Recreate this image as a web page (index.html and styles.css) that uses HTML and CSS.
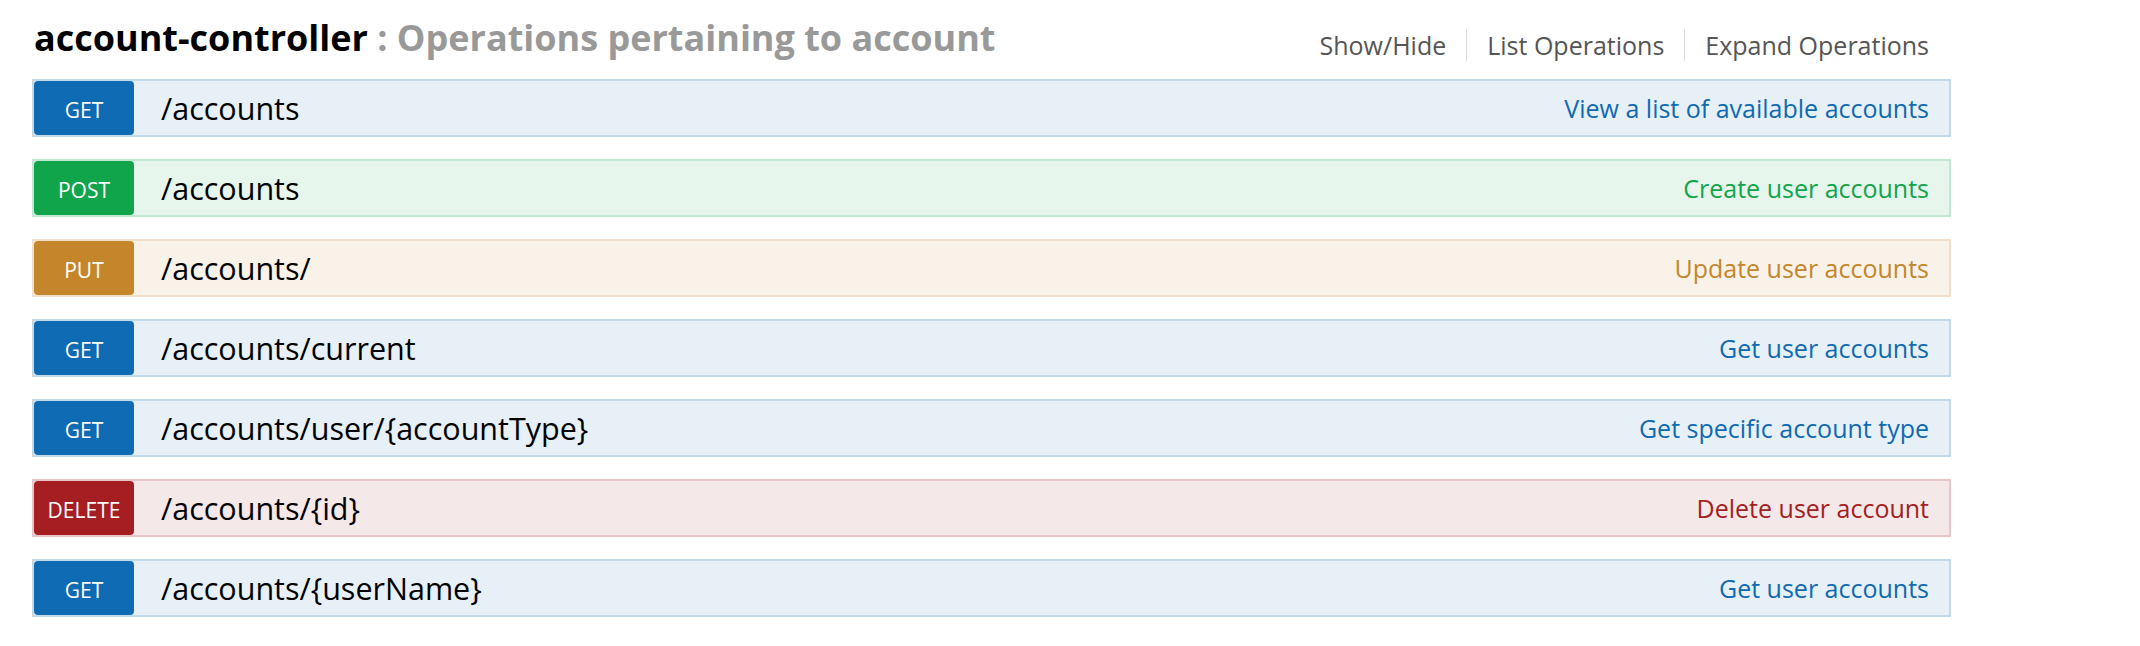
FILE: index.html
```html
<!DOCTYPE html>
<html>
<head>
<meta charset="utf-8">
<link rel="stylesheet" href="styles.css">
</head>
<body>
<div class="resource">
  <div class="heading">
    <h2 class="title">account-controller <span class="sub">: Operations pertaining to account</span></h2>
    <ul class="options">
      <li>Show/Hide</li>
      <li>List Operations</li>
      <li>Expand Operations</li>
    </ul>
  </div>
  <ul class="ops">
    <li class="op get"><span class="method">GET</span><span class="path">/accounts</span><span class="desc">View a list of available accounts</span></li>
    <li class="op post"><span class="method">POST</span><span class="path">/accounts</span><span class="desc">Create user accounts</span></li>
    <li class="op put"><span class="method">PUT</span><span class="path">/accounts/</span><span class="desc">Update user accounts</span></li>
    <li class="op get"><span class="method">GET</span><span class="path">/accounts/current</span><span class="desc">Get user accounts</span></li>
    <li class="op get"><span class="method">GET</span><span class="path">/accounts/user/{accountType}</span><span class="desc">Get specific account type</span></li>
    <li class="op delete"><span class="method">DELETE</span><span class="path">/accounts/{id}</span><span class="desc">Delete user account</span></li>
    <li class="op get"><span class="method">GET</span><span class="path">/accounts/{userName}</span><span class="desc">Get user accounts</span></li>
  </ul>
</div>
</body>
</html>
```
FILE: styles.css
```css
* { box-sizing: border-box; }
html, body { margin: 0; padding: 0; background: #fff; }
body { font-family: "Open Sans", "Noto Sans", "DejaVu Sans", sans-serif; }

.resource {
  width: 1951px;
  padding-left: 32px;
}

.heading {
  display: flex;
  justify-content: space-between;
  align-items: flex-start;
  padding-top: 13px;
  margin-bottom: 17px;
}

.title {
  margin: 0 0 0 2px;
  font-size: 36px;
  line-height: 49px;
  font-weight: 700;
  color: #000;
}
.title .sub { color: #999; }

.options {
  list-style: none;
  margin: 16px 22px 0 0;
  padding: 0;
  display: flex;
}
.options li {
  font-size: 25px;
  line-height: 32px;
  color: #555;
  padding: 0 20px;
  border-right: 1px solid #ddd;
}
.options li:last-child { border-right: none; padding-right: 0; }

.ops {
  list-style: none;
  margin: 0;
  padding: 0;
  display: flex;
  flex-direction: column;
  gap: 22px;
}

.op {
  display: flex;
  align-items: center;
  height: 58px;
  border: 2px solid;
}
.method {
  align-self: stretch;
  width: 100px;
  display: flex;
  align-items: center;
  justify-content: center;
  color: #fff;
  font-size: 21px;
  border-radius: 4px;
  padding-top: 3px;
}
.path {
  padding-left: 27px;
  font-size: 30.5px;
  color: #000;
}
.desc {
  margin-left: auto;
  padding-right: 20px;
  font-size: 25px;
}

.get { background: #e7f0f7; border-color: #c3d9ec; }
.get .method { background: #0f6ab4; }
.get .desc { color: #0f6ab4; }

.post { background: #e7f6ec; border-color: #c3e8d1; }
.post .method { background: #10a54a; }
.post .desc { color: #10a54a; }

.put { background: #f9f2e9; border-color: #f0e0ca; }
.put .method { background: #c5862b; }
.put .desc { color: #c5862b; }

.delete { background: #f5e8e8; border-color: #e8c6c7; }
.delete .method { background: #a41e22; }
.delete .desc { color: #a41e22; }
```
